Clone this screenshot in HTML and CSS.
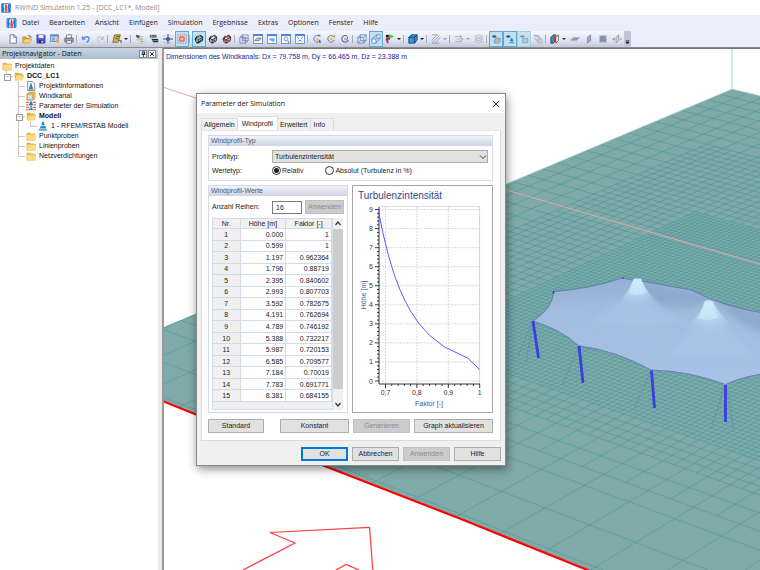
FILE: index.html
```html
<!DOCTYPE html>
<html lang="de">
<head>
<meta charset="utf-8">
<title>RWIND Simulation 1.25</title>
<link rel="stylesheet" href="styles.css">
</head>
<body>
<svg class="defs" aria-hidden="true">
  <symbol id="i-app" viewBox="0 0 12 12"><rect x=".5" y=".5" width="11" height="11" rx="1" fill="#dcecfb" stroke="#3d7ab8"/><path d="M1 1h3l-1 3 1 3-1 4H1z" fill="#2a78c8"/><path d="M11 1H9L8 5l1 6h2z" fill="#2a78c8"/><path d="M6 2v8M5 10l1-8 1.500 8z" stroke="#e0303a" fill="#fff"/></symbol>
  <symbol id="i-folder" viewBox="0 0 12 12"><path d="M1 2.500h4l1 1h5v7.500H1z" fill="#e9b94c" stroke="#d9a53c" stroke-width=".6"/><path d="M1.500 4.500h9.500V11H1.500z" fill="#fbdc83"/></symbol>
  <symbol id="i-folderopen" viewBox="0 0 12 12"><path d="M1 2h4l1 1h4.500v2H12l-1.500 6H1z" fill="#e3ab3b"/><path d="M3 5h9l-1.500 6H1z" fill="#fbd97c"/></symbol>
  <symbol id="i-info" viewBox="0 0 12 12"><path d="M2 .5h6l2.500 2.500v8.500H2z" fill="#fff" stroke="#777"/><path d="M6 3l2 6H4zM3 10h6" fill="#2a8be0" stroke="#2368b5" stroke-width=".8"/></symbol>
  <symbol id="i-tunnel" viewBox="0 0 12 12"><path d="M1 3.500l3-3h7.500V8L8.500 11H1z" fill="#f7b53a"/><path d="M1 3.500h7.500V11H1zM8.500 3.500l3-3M8.500 11l3-3" fill="#8dc6f2" stroke="#e59c20" stroke-width=".8"/><path d="M2.500 5h4.500v4.500H2.500z" fill="#ccecff"/></symbol>
  <symbol id="i-param" viewBox="0 0 12 12"><path d="M0 1.500h4M0 4.500h3M0 7.500h4M0 10.500h3M8 1.500h4M9 4.500h3M8 7.500h4M9 10.500h3" stroke="#ef6a3c" stroke-width="1.500"/><path d="M6 2v8M4 5l2-4 2 4M3.500 10h5" stroke="#247bd0" stroke-width="1.500" fill="none"/></symbol>
  <symbol id="i-model" viewBox="0 0 12 12"><path d="M5 1h2l1 4H4zM3.500 6h5l1.500 3H2zM1 10h10v1.500H1z" fill="#2a84d6"/></symbol>
  <symbol id="i-new" viewBox="0 0 12 12"><path d="M2.500 1h5l2.500 2.500V11H2.500z" fill="#fff" stroke="#586d9c"/><path d="M7 1v3h3" fill="none" stroke="#586d9c"/></symbol>
  <symbol id="i-open" viewBox="0 0 12 12"><path d="M.5 3h4l1 1.500H9V6H3L.5 11z" fill="#d99b2c"/><path d="M3 6h9l-2.500 5H.5z" fill="#f8d16a" stroke="#b98628" stroke-width=".6"/><path d="M7 2c2-1 3 0 3 2M9 3l1 1.500L11.500 3" stroke="#333" fill="none" stroke-width=".7"/></symbol>
  <symbol id="i-save" viewBox="0 0 12 12"><path d="M1 1h9l1 1v9H1z" fill="#4856d6" stroke="#3038a0" stroke-width=".6"/><path d="M3 1h6v4H3z" fill="#e8eefc"/><path d="M3.500 7.500h5V11h-5z" fill="#222a60"/><path d="M6.500 8h1.500v2.500H6.500z" fill="#fff"/></symbol>
  <symbol id="i-pic" viewBox="0 0 12 12"><path d="M.5 1h9.500v8H.5z" fill="#cfe0f8" stroke="#5376b5"/><path d="M.5 1h9.500v2H.5z" fill="#5b86d0"/><path d="M2 4h4v4H2z" fill="#82a7e4"/><path d="M8 3l3 4-1 4-3-1z" fill="#f2a259"/></symbol>
  <symbol id="i-print" viewBox="0 0 12 12"><path d="M3 1h6v4H3z" fill="#fff" stroke="#555" stroke-width=".8"/><path d="M1 5h10v4.500H1z" fill="#9ba3b5" stroke="#444b60" stroke-width=".8"/><path d="M3 8h6v3H3z" fill="#fff" stroke="#555" stroke-width=".8"/></symbol>
  <symbol id="i-undo" viewBox="0 0 12 12"><path d="M3 5.500c3-3.500 7-2.500 6.500 1C9 8.500 8 9.500 6.500 10" fill="none" stroke="#5b8ee0" stroke-width="1.800"/><path d="M1 2v5h5z" fill="#5b8ee0"/></symbol>
  <symbol id="i-redo" viewBox="0 0 12 12"><path d="M9 5.500C6 2 2.500 3 3 6.500 3.500 8.500 4 9 5.500 9.500" fill="none" stroke="#aeb5c6" stroke-width="1.200"/><path d="M10.500 2.500V7H6z" fill="#b7bdcc"/></symbol>
  <symbol id="i-chisel" viewBox="0 0 12 12"><path d="M3 1h7L9 5 7 10H1z" fill="#d8b24e" stroke="#75602c"/><path d="M5 3h4M4 5l4 1M8 8h3v3" stroke="#4d421e" fill="none"/></symbol>
  <symbol id="i-meshA" viewBox="0 0 12 12"><path d="M1 3h9M2 6h9M5 9h7M5 1v8M8 4v8" stroke="#7b8798" stroke-width=".8" stroke-dasharray="1.500 .7"/><path d="M1 1l4 1v3L2 4z" fill="#393f4c"/><path d="M3 7h4v3H3z" fill="#e6dc7b"/></symbol>
  <symbol id="i-meshB" viewBox="0 0 12 12"><path d="M1 1h8v4H1z" fill="#5b6a7b"/><path d="M3 6h8v4H5z" fill="#222"/><path d="M1 4h8M4 8h8M3 1v3" stroke="#7bc391"/></symbol>
  <symbol id="i-cross" viewBox="0 0 12 12"><path d="M0 6h12M6 0v12M4.500 4.500h3v3h-3z" stroke="#2c4f99" stroke-width="1.200" fill="none"/><path d="M1 2h10M1 10h10" stroke="#7b98cf" stroke-width=".7" stroke-dasharray="1 1"/></symbol>
  <symbol id="i-snap" viewBox="0 0 12 12"><path d="M1 1h10v10H1z" fill="none" stroke="#df7068" stroke-dasharray="1.500 1"/><path d="M3.500 3.500h5v5h-5z" fill="#f7b7ac" stroke="#e04c3c" stroke-width="1.200"/></symbol>
  <symbol id="i-cubek" viewBox="0 0 12 12"><path d="M2 5l5-3 3 2v4l-5 3-3-2zM2 5l3 2 5-3M5 7v4M1 7l3-5M7 1l4 3M3 11l8-5" fill="none" stroke="#15181f" stroke-width="1.100"/><path d="M3 8l3-4 2 3" stroke="#48a29e" fill="none"/></symbol>
  <symbol id="i-cuber" viewBox="0 0 12 12"><path d="M2 5l5-3 3 2v4l-5 3-3-2zM2 5l3 2 5-3M5 7v4M1 7l3-5M7 1l4 3" fill="none" stroke="#181c22" stroke-width="1.100"/><path d="M6 6.500h3v2.500H6z" fill="#e03636"/></symbol>
  <symbol id="i-cuberr" viewBox="0 0 12 12"><path d="M2 5l5-3 3 2v4l-5 3-3-2zM2 5l3 2 5-3M5 7v4M1 7l3-5M7 1l4 3" fill="none" stroke="#181c22" stroke-width="1.100"/><path d="M6 6.500h3v2.500H6zM1.500 6h3v2.500h-3zM5 2.500h3v2H5z" fill="#e03636"/></symbol>
  <symbol id="i-cubew" viewBox="0 0 12 12"><path d="M1 4h7v7H1zM4 1h7v7H4zM1 4l3-3M8 4l3-3M8 11l3-3M1 11l3-3" fill="none" stroke="#557dbb" stroke-width=".9"/></symbol>
  <symbol id="i-cubewr" viewBox="0 0 12 12"><path d="M1 4h7v7H1zM4 1h7v7H4zM1 4l3-3M8 11l3-3" fill="none" stroke="#557dbb" stroke-width=".9"/><path d="M4 5h7M6 7l-2-2 2-2" stroke="#e45364" fill="none"/></symbol>
  <symbol id="i-win" viewBox="0 0 12 12"><path d="M.5 .5h11v11H.5z" fill="#f5f9ff" stroke="#5279bc"/><path d="M0 0h12v2.500H0z" fill="#4f86d9"/></symbol>
  <symbol id="i-winA" viewBox="0 0 12 12"><use href="#i-win"/><path d="M2 8l3-3h5L7 8z" fill="#dfd47c" stroke="#454f60" stroke-width=".8"/></symbol>
  <symbol id="i-winB" viewBox="0 0 12 12"><use href="#i-win"/><path d="M3 5h6v4H6L3 7z" fill="#7ba5e5"/></symbol>
  <symbol id="i-winC" viewBox="0 0 12 12"><use href="#i-win"/><circle cx="6" cy="6" r="2.300" fill="#e7f3ff" stroke="#7d94b7"/><path d="M8 8l2 2.500" stroke="#8b8065" stroke-width="1.300"/></symbol>
  <symbol id="i-winD" viewBox="0 0 12 12"><use href="#i-win"/><path d="M3 4l6 6M9 4l-6 6" stroke="#4d75be" stroke-width="1.200" stroke-dasharray="2.500 2"/></symbol>
  <symbol id="i-rotA" viewBox="0 0 12 12"><path d="M8.500 2.500A4 4 0 1 0 10 7" fill="none" stroke="#5574a6" stroke-width="1.100"/><path d="M6 4l3 4H5z" fill="#f4ba4b"/><path d="M8 6l3 4-2 1z" fill="#635b4a"/><path d="M7 1h3v3z" fill="#5574a6"/></symbol>
  <symbol id="i-rotB" viewBox="0 0 12 12"><path d="M8.500 2.500A4 4 0 1 0 10 7" fill="none" stroke="#5574a6" stroke-width="1.100"/><circle cx="6" cy="6" r="1.800" fill="#f4ba4b"/><path d="M7 4l4-3v3z" fill="#de8936"/></symbol>
  <symbol id="i-rotC" viewBox="0 0 12 12"><path d="M8.500 2.500A4 4 0 1 0 10 7" fill="none" stroke="#526583" stroke-width="1.300"/><path d="M5 6h4V3" fill="none" stroke="#526583"/></symbol>
  <symbol id="i-proj" viewBox="0 0 12 12"><path d="M1 6h5v5H1zM7 1h4v4H7zM1 6l6-5M6 11l5-6" fill="#f1f8ff" stroke="#5585bd"/></symbol>
  <symbol id="i-axes" viewBox="0 0 12 12"><path d="M1 1h4v3H1z" fill="#222"/><path d="M5 1l5 2-5 2z" fill="#3acb3a" stroke="#3acb3a"/><path d="M2 4h4v3H4v4H2z" fill="#db2631"/><path d="M1 5h2v3H1z" fill="#2d3bc9"/></symbol>
  <symbol id="i-solid" viewBox="0 0 12 12"><path d="M1 4l3-3h7v6L8 11H1z" fill="#2f98dd" stroke="#143b61"/><path d="M1 4h7v7M8 4l3-3" stroke="#143b61" fill="none"/></symbol>
  <symbol id="i-hatch" viewBox="0 0 12 12"><path d="M1 1h7M1 11h9M1 8l6-7M1 11L10 2M5 11l6-7" stroke="#9ca6b8" stroke-width="1.200" fill="none"/></symbol>
  <symbol id="i-arrows" viewBox="0 0 12 12"><path d="M1 3h8M3 6h8M1 9h8M7 1l2 2-2 2M9 4l2 2-2 2M7 7l2 2-2 2" stroke="#a7afbf" fill="none"/></symbol>
  <symbol id="i-layers" viewBox="0 0 12 12"><path d="M1 3l5-2 5 2-5 2zM1 6l5-2 5 2-5 2zM1 9l5-2 5 2-5 2z" stroke="#b1b8c7" fill="none"/></symbol>
  <symbol id="i-visA" viewBox="0 0 12 12"><path d="M1 3q3-3 6 0-3 3-6 0" fill="#475768"/><path d="M4 7l2-2h5v4l-2 2H4z" fill="#94bddd" stroke="#5b8bb6" stroke-width=".7"/><circle cx="7" cy="8" r="1.800" fill="#f4b941"/></symbol>
  <symbol id="i-visB" viewBox="0 0 12 12"><path d="M1 3q3-3 6 0-3 3-6 0" fill="#475768"/><path d="M8 5l1.500 3.500h-3zM5 10.500h6" fill="#2b7bc1" stroke="#2b7bc1"/></symbol>
  <symbol id="i-visC" viewBox="0 0 12 12"><path d="M1 3q3-3 6 0-3 3-6 0" fill="#8197a9"/><path d="M4.500 5.500h6v5h-6z" fill="#b3cddd" stroke="#7aa5be"/></symbol>
  <symbol id="i-off" viewBox="0 0 12 12"><path d="M1 3q3-3 6 0L9 6M2 5l4 4" fill="#c6cad3" stroke="#aab1be" stroke-width="1.300"/><path d="M6 6h5v5H6z" fill="#c9cdd6" stroke="#abb2bf"/></symbol>
  <symbol id="i-section" viewBox="0 0 12 12"><path d="M1 4l3-3h3v7L4 11H1z" fill="#2f8fd2" stroke="#1c2b3a" stroke-width=".8"/><path d="M4 4l3-3v7l-3 3z" fill="#e43835"/><path d="M7 4l3-3v7l-3 3z" fill="#fff" stroke="#222" stroke-width=".8"/></symbol>
  <symbol id="i-planeA" viewBox="0 0 12 12"><path d="M0 8l4-4h8L8 8z" fill="#8e97aa" stroke="#bdc3cf"/></symbol>
  <symbol id="i-planeB" viewBox="0 0 12 12"><path d="M4 4l4-3v7l-4 3z" fill="#a1a9ba" stroke="#828ca1"/></symbol>
  <symbol id="i-planeC" viewBox="0 0 12 12"><path d="M2 2h8v8H2z" fill="#8790a5" stroke="#bac0cd"/></symbol>
  <symbol id="i-planeD" viewBox="0 0 12 12"><path d="M5 4l3-3v7l-3 3zM1 6h3M9 6h3M2 8l-1-2 2-1" fill="#d5d9e2" stroke="#8991a5"/></symbol>
</svg>

<header class="titlebar"><svg class="icon"><use href="#i-app"/></svg><span>RWIND Simulation 1.25 - [DCC_LC1*, Modell]</span></header>
<nav class="menubar" aria-label="Menü">
  <svg class="icon"><use href="#i-app"/></svg>
  <button>Datei</button><button>Bearbeiten</button><button>Ansicht</button><button>Einfügen</button><button>Simulation</button><button>Ergebnisse</button><button>Extras</button><button>Optionen</button><button>Fenster</button><button>Hilfe</button>
</nav>
<div class="toolbar" role="toolbar" aria-label="Werkzeuge">
  <div class="tools">
  <button aria-label="Neu"><svg><use href="#i-new"/></svg></button>
  <button aria-label="Öffnen"><svg><use href="#i-open"/></svg></button>
  <button aria-label="Speichern"><svg><use href="#i-save"/></svg></button>
  <button aria-label="Bild"><svg><use href="#i-pic"/></svg></button>
  <button aria-label="Drucken"><svg><use href="#i-print"/></svg></button>
  <i></i>
  <button aria-label="Rückgängig"><svg><use href="#i-undo"/></svg></button>
  <button aria-label="Wiederholen"><svg><use href="#i-redo"/></svg></button>
  <i></i>
  <button class="drop" aria-label="Bearbeiten"><svg><use href="#i-chisel"/></svg></button>
  <i></i>
  <button aria-label="Netz"><svg><use href="#i-meshA"/></svg></button>
  <button aria-label="Netzverdichtung"><svg><use href="#i-meshB"/></svg></button>
  <button aria-label="Raster"><svg><use href="#i-cross"/></svg></button>
  <button class="on" aria-label="Fang"><svg><use href="#i-snap"/></svg></button>
  <i></i>
  <button class="on" aria-label="Modell"><svg><use href="#i-cubek"/></svg></button>
  <button aria-label="Modell vereinfacht"><svg><use href="#i-cuber"/></svg></button>
  <button aria-label="Modell beide"><svg><use href="#i-cuberr"/></svg></button>
  <i></i>
  <button aria-label="Ansicht zurück"><svg><use href="#i-cubewr"/></svg></button>
  <button aria-label="Ansicht Boden"><svg><use href="#i-winA"/></svg></button>
  <button aria-label="Vorherige Ansicht"><svg><use href="#i-winB"/></svg></button>
  <button aria-label="Zoom"><svg><use href="#i-winC"/></svg></button>
  <button aria-label="Alles zeigen"><svg><use href="#i-winD"/></svg></button>
  <i></i>
  <button aria-label="Drehen"><svg><use href="#i-rotA"/></svg></button>
  <button aria-label="Drehpunkt"><svg><use href="#i-rotB"/></svg></button>
  <button aria-label="Drehung zurücksetzen"><svg><use href="#i-rotC"/></svg></button>
  <i></i>
  <button aria-label="Drahtmodell"><svg><use href="#i-cubew"/></svg></button>
  <button class="on" aria-label="Perspektive"><svg><use href="#i-proj"/></svg></button>
  <button class="drop" aria-label="Achsen"><svg><use href="#i-axes"/></svg></button>
  <i></i>
  <button class="drop" aria-label="Darstellung"><svg><use href="#i-solid"/></svg></button>
  <i></i>
  <button class="drop dim" aria-label="Schraffur"><svg><use href="#i-hatch"/></svg></button>
  <i></i>
  <button class="drop dim" aria-label="Vektoren"><svg><use href="#i-arrows"/></svg></button>
  <button aria-label="Ebenen"><svg><use href="#i-layers"/></svg></button>
  <i></i>
  <button class="on" aria-label="Windkanal zeigen"><svg><use href="#i-visA"/></svg></button>
  <button class="on" aria-label="Modell zeigen"><svg><use href="#i-visB"/></svg></button>
  <button class="on pale" aria-label="Netz zeigen"><svg><use href="#i-visC"/></svg></button>
  <button aria-label="Ausblenden"><svg><use href="#i-off"/></svg></button>
  <i></i>
  <button class="drop" aria-label="Schnitt"><svg><use href="#i-section"/></svg></button>
  <button aria-label="Ebene XY"><svg><use href="#i-planeA"/></svg></button>
  <button aria-label="Ebene XZ"><svg><use href="#i-planeB"/></svg></button>
  <button aria-label="Ebene YZ"><svg><use href="#i-planeC"/></svg></button>
  <button aria-label="Ebene verschieben"><svg><use href="#i-planeD"/></svg></button>
  <button class="more" aria-label="Mehr"><svg viewBox="0 0 6 14"><path d="M1 9h4M1 10.500h4L3 13z" fill="#222" stroke="#222" stroke-width=".8"/></svg></button>
  </div>
</div>

<main class="workspace">
  <aside class="navigator">
    <div class="nav-head"><h2>Projektnavigator - Daten</h2>
      <button aria-label="Anheften"><svg viewBox="0 0 8 8"><path d="M3 1h3v3.500H3zM2 4.500h5M4.500 4.500V8M5.500 1v3" fill="none" stroke="#111"/></svg></button>
      <button aria-label="Schließen"><svg viewBox="0 0 8 8"><path d="M1.500 1.500l5 5M6.500 1.500l-5 5" stroke="#111" stroke-width="1.200"/></svg></button>
    </div>
    <ul class="tree">
      <li><span><svg class="icon"><use href="#i-folder"/></svg>Projektdaten</span>
        <ul>
          <li class="open last"><span><svg class="icon"><use href="#i-folderopen"/></svg><b>DCC_LC1</b></span>
            <ul>
              <li><span><svg class="icon"><use href="#i-info"/></svg>Projektinformationen</span></li>
              <li><span><svg class="icon"><use href="#i-tunnel"/></svg>Windkanal</span></li>
              <li><span><svg class="icon"><use href="#i-param"/></svg>Parameter der Simulation</span></li>
              <li class="open"><span><svg class="icon"><use href="#i-folderopen"/></svg><b>Modell</b></span>
                <ul><li class="last"><span><svg class="icon"><use href="#i-model"/></svg>1 - RFEM/RSTAB Modell</span></li></ul>
              </li>
              <li><span><svg class="icon"><use href="#i-folder"/></svg>Punktproben</span></li>
              <li><span><svg class="icon"><use href="#i-folder"/></svg>Linienproben</span></li>
              <li class="last"><span><svg class="icon"><use href="#i-folder"/></svg>Netzverdichtungen</span></li>
            </ul>
          </li>
        </ul>
      </li>
    </ul>
  </aside>

  <section class="viewport" aria-label="Modellansicht">
    <svg class="scene" viewBox="164 49 596 521" preserveAspectRatio="xMinYMin slice" aria-hidden="true">
      <defs>
        <clipPath id="floor"><path d="M732 89L900 129V694L588 570 461 519 322 465 196 414.500 140 392V337L506 184z"/></clipPath>
        <linearGradient id="cloth" x1="0" y1="0" x2=".15" y2="1"><stop offset="0" stop-color="#8ea9cd"/><stop offset=".35" stop-color="#a1bcde"/><stop offset="1" stop-color="#a7c2e4"/></linearGradient>
        <radialGradient id="coneA" gradientUnits="userSpaceOnUse" cx="637" cy="279" r="31"><stop offset="0" stop-color="#d0e9fc"/><stop offset=".45" stop-color="#bddaf5"/><stop offset="1" stop-color="#a7c2e4" stop-opacity="0"/></radialGradient>
        <radialGradient id="coneB" gradientUnits="userSpaceOnUse" cx="709" cy="301" r="37"><stop offset="0" stop-color="#d0e9fc"/><stop offset=".45" stop-color="#bad7f3"/><stop offset="1" stop-color="#a7c2e4" stop-opacity="0"/></radialGradient>
        <filter id="soft" x="-20%" y="-20%" width="140%" height="140%"><feGaussianBlur stdDeviation="3"/></filter>
        <clipPath id="tent"><path d="M533 321Q552 309 554 291.500 590 289 622 278L691 290Q725 308 770 314V373Q743 376 725.500 384.500 690 371 651 370 615 350 579 346 560 329 533 321z"/></clipPath>
      </defs>
      <g clip-path="url(#floor)"><path d="M140 49h760v700H140z" fill="#80a9a9"/><path id="grid" fill="none" stroke="#2c9391" stroke-width=".8" stroke-opacity=".5"/></g>
      <path d="M732 89V49" stroke="#c4e3e2" stroke-width="1.500"/>
      <path d="M506 184L732 89 800 105" stroke="#c4e3e2" fill="none" stroke-width=".8"/>
      <path d="M164 87.500L196 98 506 190 780 270" stroke="#e8a9a9" fill="none"/>
      <path d="M160 400L196 414.500 322 465 461 519 595 573" stroke="#f00" stroke-width="2.200" fill="none"/>
      <path d="M243 570L295 543 270 532.500 369.500 527.500 373 572M336 570L346 564.500 359 570" fill="none" stroke="#ff3b3b" stroke-width="1.200"/>
      <path d="M533 321L518 356M533 321L526 363M579 346L562 385M651 370L634 409M725 385L711 429M726 385L734 431" stroke="#5a76b8" stroke-width=".6" stroke-opacity=".7"/>
      <g clip-path="url(#tent)">
        <path d="M530 270h240v120H530z" fill="url(#cloth)"/>
        <path d="M640 281Q672 290 691 290L770 312V336Q738 326 715 300 680 315 655 303z" fill="#839fc6" opacity=".6" filter="url(#soft)"/>
        <path d="M622 298Q606 312 590 320 630 335 684 322 660 308 652 298zM695 322Q680 345 664 356H756Q735 340 724 322z" fill="#abc7e9" opacity=".5" filter="url(#soft)"/>
      </g>
      <path d="M633 279.500L635 278.500H640L641.500 279.500Q648 297 668 310 637 330 606 310 627 299 633 279.500z" fill="url(#coneA)"/>
      <path d="M704.500 301.500L706 300.500H711L713 301.500Q719 317 744 334 709 355 674 338 698 322 704.500 301.500z" fill="url(#coneB)"/>
      <path d="M634 281L629 294 637 295 645 293 641 281zM706 302L698 319 709 320 718 318 712 302z" fill="#d0e9fb" opacity=".6"/>
      <path d="M533 321Q552 309 554 291.500 590 289 622 278L633 280M642 281L691 290Q725 308 770 314M770 373Q743 376 725.500 384.500 690 371 651 370 615 350 579 346 560 329 533 321" fill="none" stroke="#5f7bb2" stroke-width=".9"/>
      <path d="M533 321L538.500 358M579 346L583 383M651.500 370.500L654.500 408M725.500 385V422" stroke="#3d3de6" stroke-width="2.800"/>
      <path d="M553.500 291V294M622 278h1.500" stroke="#3345b0" stroke-width="1.500"/>
    </svg>
    <p class="dims">Dimensionen des Windkanals: Dx = 79.758 m, Dy = 66.465 m, Dz = 23.388 m</p>

    <form class="dialog" role="dialog" aria-labelledby="dlg-title">
      <div class="dlg-head"><h1 id="dlg-title">Parameter der Simulation</h1><button type="button" aria-label="Schließen"><svg viewBox="0 0 8 8"><path d="M1 1l6 6M7 1L1 7" stroke="#222" stroke-width=".9"/></svg></button></div>
      <div class="tabs" role="tablist"><button type="button" role="tab">Allgemein</button><button type="button" role="tab" aria-selected="true">Windprofil</button><button type="button" role="tab">Erweitert</button><button type="button" role="tab">Info</button></div>
      <div class="sheet">
        <fieldset class="group">
          <h3>Windprofil-Typ</h3>
          <div class="fields">
            <label for="ptype">Profiltyp:</label>
            <div class="pick"><select id="ptype"><option>Turbulenzintensität</option></select><svg viewBox="0 0 8 6"><path d="M1 1.500l3 3 3-3" fill="none" stroke="#444"/></svg></div>
            <span>Wertetyp:</span>
            <div class="radios"><label><input type="radio" name="w" checked>Relativ</label><label><input type="radio" name="w">Absolut (Turbulenz in %)</label></div>
          </div>
        </fieldset>
        <div class="cols">
          <fieldset class="group values">
            <h3>Windprofil-Werte</h3>
            <div class="count"><label for="rows">Anzahl Reihen:</label><input id="rows" type="text" value="16"><button type="button" disabled>Anwenden</button></div>
            <div class="listing">
              <div class="tablebox">
              <table>
                <thead><tr><th>Nr.</th><th>Höhe [m]</th><th>Faktor [-]</th></tr></thead>
                <tbody>
                <tr><th>1</th><td>0.000</td><td>1</td></tr>
                <tr><th>2</th><td>0.599</td><td>1</td></tr>
                <tr><th>3</th><td>1.197</td><td>0.962364</td></tr>
                <tr><th>4</th><td>1.796</td><td>0.88719</td></tr>
                <tr><th>5</th><td>2.395</td><td>0.840602</td></tr>
                <tr><th>6</th><td>2.993</td><td>0.807703</td></tr>
                <tr><th>7</th><td>3.592</td><td>0.782675</td></tr>
                <tr><th>8</th><td>4.191</td><td>0.762694</td></tr>
                <tr><th>9</th><td>4.789</td><td>0.746192</td></tr>
                <tr><th>10</th><td>5.388</td><td>0.732217</td></tr>
                <tr><th>11</th><td>5.987</td><td>0.720153</td></tr>
                <tr><th>12</th><td>6.585</td><td>0.709577</td></tr>
                <tr><th>13</th><td>7.184</td><td>0.70019</td></tr>
                <tr><th>14</th><td>7.783</td><td>0.691771</td></tr>
                <tr><th>15</th><td>8.381</td><td>0.684155</td></tr>
                </tbody>
              </table>
              </div>
              <div class="scroll"><svg viewBox="0 0 8 8"><path d="M1.500 5.500l2.500-3 2.500 3" fill="none" stroke="#333" stroke-width="1.200"/></svg><b></b><svg viewBox="0 0 8 8"><path d="M1.500 2.500l2.500 3 2.500-3" fill="none" stroke="#333" stroke-width="1.200"/></svg></div>
            </div>
          </fieldset>
          <figure class="chart"><svg id="chart" viewBox="0 0 139 226" role="img" aria-label="Turbulenzintensität"></svg></figure>
        </div>
        <div class="actions"><button type="button">Standard</button><button type="button">Konstant</button><button type="button" disabled>Generieren</button><button type="button">Graph aktualisieren</button></div>
      </div>
      <div class="footer"><button type="button" class="primary">OK</button><button type="button">Abbrechen</button><button type="button" disabled>Anwenden</button><button type="button">Hilfe</button></div>
    </form>
  </section>
</main>
<script src="view.js"></script>
</body>
</html>
```
FILE: styles.css
```css
* { box-sizing: border-box; }
html, body { height: 100%; }
body { margin: 0; display: flex; flex-direction: column; overflow: hidden; background: #fff; color: #222; font-family: "Liberation Sans", Arial, sans-serif; font-size: 7px; line-height: 10px; }
button, input, select { font: inherit; color: inherit; margin: 0; padding: 0; border: 0; background: none; }
h1, h2, h3, p, ul, figure { margin: 0; padding: 0; font-size: inherit; font-weight: normal; }
ul { list-style: none; }
fieldset { margin: 0; min-width: 0; }
svg { display: block; }
.defs { position: absolute; width: 0; height: 0; }
.icon { width: 10px; height: 10px; flex: none; }

.titlebar { display: flex; align-items: center; gap: 4px; height: 15px; padding: 0 1px; color: #8b8b8b; font-family: "Open Sans", sans-serif; }
.menubar { display: flex; align-items: center; gap: 10px; height: 16px; padding: 0 6px; background: #ebeefa; color: #1a1a1a; font-family: "Open Sans", sans-serif; }
.menubar .icon { width: 11px; margin-right: -5px; }
.toolbar { height: 16px; background: #ebeefa; }
.tools { display: flex; width: max-content; height: 16px; padding-left: 6px; background: linear-gradient(#f7f8fd, #dfe3f0 60%, #c3c8dc); border-radius: 0 3px 3px 0; }
.tools button { display: flex; align-items: center; width: 14px; padding: 1px; }
.tools svg { width: 12px; height: 12px; padding: 1px; }
.tools i { width: 3px; border-left: 1px solid #a5acc0; margin: 4px 0; }
.tools .on { background: #bfe1f3; border: 1px solid #62a8cf; padding: 0; }
.tools .pale { background: #c4e3ee; border-color: #a3cfe2; }
.tools .drop { width: 20px; }
.tools .drop::after { content: ""; border: 2px solid transparent; border-top-color: #222; border-bottom: 0; margin-left: 1px; }
.tools .dim::after { border-top-color: #9aa2b3; }
.tools .more { width: 7px; background: #c0c5d6; padding: 0; }
.tools .more svg { width: 7px; height: 16px; }

.workspace { flex: 1; min-height: 0; display: grid; grid-template-columns: 158px 1fr; gap: 4px; background: #e9e9ee; border-top: 1px solid #8c8c8c; }
.navigator { background: #fff; }
.nav-head { display: flex; align-items: center; gap: 1px; height: 11px; padding: 0 2px; background: linear-gradient(#c8d5e2, #a9bccd); color: #111; }
.nav-head h2 { flex: 1; font-family: "Open Sans", sans-serif; }
.nav-head button { width: 8px; height: 8px; background: #f3f3f3; border: 1px solid #888; }
.tree { padding: 2px; color: #111; }
.tree span { display: flex; align-items: center; gap: 3px; height: 10px; white-space: nowrap; }
.tree ul { padding-left: 12px; }
.tree li { position: relative; }
.tree ul li::before { content: ""; position: absolute; left: -8px; top: 0; bottom: 0; border-left: 1px solid #c9c9c9; }
.tree ul li.last::before { bottom: auto; height: 5px; }
.tree ul li::after { content: ""; position: absolute; left: -8px; top: 5px; width: 7px; border-top: 1px solid #c9c9c9; }
.tree ul li.open > span::before { content: "−"; position: absolute; z-index: 1; left: -10px; top: 3px; width: 5px; height: 5px; border: 1px solid #999; background: #fff; font-size: 5px; line-height: 3px; color: #335; text-align: center; }

.viewport { position: relative; min-width: 0; border-left: 2px solid #999; border-top: 1px solid #777; background: #fff; }
.scene { position: absolute; inset: 0; width: 100%; height: 100%; }
.dims { position: absolute; left: 2px; top: 3px; color: #1c1c92; white-space: nowrap; }

.dialog { position: absolute; left: 32px; top: 44px; width: 310px; background: #f0f0f0; border: 1px solid #888; box-shadow: 1px 3px 9px rgba(0, 0, 0, .45); padding-bottom: 4px; }
.dlg-head { display: flex; align-items: center; justify-content: space-between; height: 19px; padding: 0 5px 0 4px; background: #fff; color: #111; font-family: "Open Sans", sans-serif; }
.dlg-head button, .dlg-head svg { width: 8px; height: 8px; }
.tabs { display: flex; align-items: flex-end; height: 17px; padding: 0 4px; }
.tabs button { height: 12px; padding: 0 2px; border: 1px solid #dcdcdc; border-bottom: 0; border-left-width: 0; }
.tabs button:first-child { border-left-width: 1px; }
.tabs button:last-child { padding: 0 8px 0 3px; }
.tabs [aria-selected=true] { height: 14px; padding: 0 4px; background: #fff; }
.sheet { margin: 0 4px; padding: 4px 7px 7px 6px; background: #fff; border: 1px solid #dcdcdc; border-top-color: #e6e6e6; display: grid; gap: 4px; }
.group { border: 1px solid #d5dae8; padding: 0; }
.group h3 { height: 10px; padding-left: 2px; background: linear-gradient(#f1f3f9, #ccd3e4); color: #515b70; }
.fields { display: grid; grid-template-columns: 60px 1fr; row-gap: 1px; align-items: center; padding: 4px 4px 3px 3px; }
.pick { position: relative; }
.pick select { appearance: none; display: block; width: 100%; height: 13px; padding: 0 2px; background: #e1e1e1; border: 1px solid #adadad; }
.pick svg { position: absolute; right: 1px; top: 4px; width: 8px; height: 6px; }
.radios { display: flex; gap: 22px; height: 13px; align-items: center; }
.radios label { display: flex; align-items: center; gap: 1px; }
.radios input { appearance: none; width: 9px; height: 9px; border: 1px solid #333; border-radius: 50%; background: #fff; }
.radios input:checked { background: radial-gradient(#222 2px, #fff 3px); }
.cols { display: grid; grid-template-columns: 140px 1fr; gap: 4px; }
.count { display: flex; align-items: center; height: 22px; padding: 0 3px; }
.count label { flex: 1; }
.count input { width: 30px; height: 13px; border: 1px solid #7a7a7a; padding: 0 3px; }
.count button { width: 39px; margin-left: 3px; }
.listing { display: flex; height: 192px; margin: 0 4px 2px 3px; }
.tablebox { flex: 1; border: 1px solid #d3dae8; background: #f0f0f0; }
table { width: 100%; height: 183px; border-collapse: collapse; table-layout: fixed; background: #fff; }
th, td { padding: 0 2px; border: 1px solid #d3dae8; border-top: 0; border-left: 0; font-weight: normal; line-height: 9px; text-align: right; }
th { background: #f0f0f0; text-align: center; }
thead th:first-child { width: 27px; }
.scroll { display: flex; flex-direction: column; width: 10px; background: #f0f0f0; }
.scroll svg { width: 10px; height: 11px; padding: 1px; }
.scroll b { flex: 1; background: #cdcdcd; margin-bottom: 10px; }
.chart { border: 1px solid #a5a5a5; background: #fff; }
.chart svg { width: 100%; height: 100%; }
.chart text { font-size: 7px; fill: #333; }
.chart .title { font-size: 10px; fill: #2f4b83; }
.chart .name { fill: #3d5c98; }

.actions { display: grid; grid-template-columns: 56px 8px 69px 57px 1fr; column-gap: 4px; padding-top: 2px; }
.actions button:nth-child(2) { grid-column: 3; }
.count button, .actions button, .footer button { height: 14px; background: #e1e1e1; border: 1px solid #adadad; line-height: 10px; }
.footer { display: flex; justify-content: flex-end; gap: 4px; padding: 6px 4px 0; }
.footer button { width: 47px; }
button:disabled { color: #8a8a8a; background: #ccc !important; border-color: #bfbfbf !important; }
.footer .primary { border: 2px solid #0078d7; }
```
FILE: view.js
```js
// Floor grid in two-point perspective, refined towards the model.
const corner = [732, 89];
const farA = [2800, -780];
const farB = [-2833, -780];

const det = (p, q, r) =>
  p[0] * (q[1] - r[1]) - p[1] * (q[0] - r[0]) + (q[0] * r[1] - q[1] * r[0]);

function toFloor(p) {
  const a = det(p, farA, farB);
  return [det(corner, p, farB) / a, det(corner, farA, p) / a];
}
const du = toFloor([719.5, 94.25])[0];
const dv = toFloor([748, 92.76])[1];

function toScreen(u, v) {
  const a = u * du, b = v * dv, w = 1 + a + b;
  return [0, 1].map(i => ((corner[i] + a * farA[i] + b * farB[i]) / w).toFixed(1)).join(' ');
}
const cell = p => { const f = toFloor(p); return [f[0] / du, f[1] / dv]; };

// Each level draws only the lines that the coarser one leaves out.
function lines(step, u0, u1, v0, v1) {
  let d = '';
  for (let u = u0; u <= u1; u += step) if (step === 2 || u % (step * 2)) d += `M${toScreen(u, v0)}L${toScreen(u, v1)}`;
  for (let v = v0; v <= v1; v += step) if (step === 2 || v % (step * 2)) d += `M${toScreen(u0, v)}L${toScreen(u1, v)}`;
  return d;
}
const uEnd = Math.ceil(cell([163, 401])[0]) + 1;
const u1 = Math.round(cell([510, 442])[0]);
const mid = cell([708, 142]).map(Math.round), uMid = Math.round(cell([560, 417])[0]);
const fine = cell([698, 208]).map(Math.round), uFine = Math.round(cell([600, 405])[0]);
document.getElementById('grid').setAttribute('d',
  lines(2, 0, uEnd, 0, 70) + lines(1, 0, u1, 0, 66) +
  lines(.5, mid[0], uMid, mid[1], 60) + lines(.25, fine[0], uFine, fine[1], 50));

// Profile chart
const profile = [[1, .599], [.962364, 1.197], [.88719, 1.796], [.840602, 2.395], [.807703, 2.993],
  [.782675, 3.592], [.762694, 4.191], [.746192, 4.789], [.732217, 5.388], [.720153, 5.987],
  [.709577, 6.585], [.70019, 7.184], [.691771, 7.783], [.684155, 8.381], [.6773, 8.98]];
const X = f => 32.5 + (f - .7) * 314, Y = h => 195 - h * 19.05;
let out = '<text class="title" x="5" y="13">Turbulenzintensität</text>';
let grid = '', ticks = 'M26 21V198H127';
for (let h = 0; h <= 9; h++) {
  grid += `M26 ${Y(h)}H127`;
  ticks += `M22 ${Y(h)}H26`;
  out += `<text x="20" y="${Y(h) + 2.5}" text-anchor="end">${h}</text>`;
  if (h < 9) for (let k = 1; k < 5; k++) ticks += `M24 ${Y(h + k / 5)}H26`;
}
for (let i = 7; i <= 10; i++) {
  grid += `M${X(i / 10)} 21V198`;
  ticks += `M${X(i / 10)} 198V202`;
  out += `<text x="${X(i / 10)}" y="209" text-anchor="middle">${i < 10 ? '0,' + i : '1'}</text>`;
  if (i < 10) for (let k = 1; k < 5; k++) ticks += `M${X((i + k / 5) / 10)} 198V200`;
}
out += `<path d="M26 20.5H126.5V198" fill="none" stroke="#ddd"/>
<path d="${grid}" fill="none" stroke="#cfcfcf" stroke-width=".8" stroke-dasharray="2 1"/>
<path d="${ticks}" fill="none" stroke="#222" stroke-width=".9"/>
<path d="M${profile.map(p => X(p[0]).toFixed(1) + ' ' + Y(p[1]).toFixed(1)).join('L')}" fill="none" stroke="#5a5aff"/>
<text class="name" x="76" y="220" text-anchor="middle">Faktor [-]</text>
<text class="name" transform="translate(13 109) rotate(-90)" text-anchor="middle">Höhe [m]</text>`;
document.getElementById('chart').innerHTML = out;
```
